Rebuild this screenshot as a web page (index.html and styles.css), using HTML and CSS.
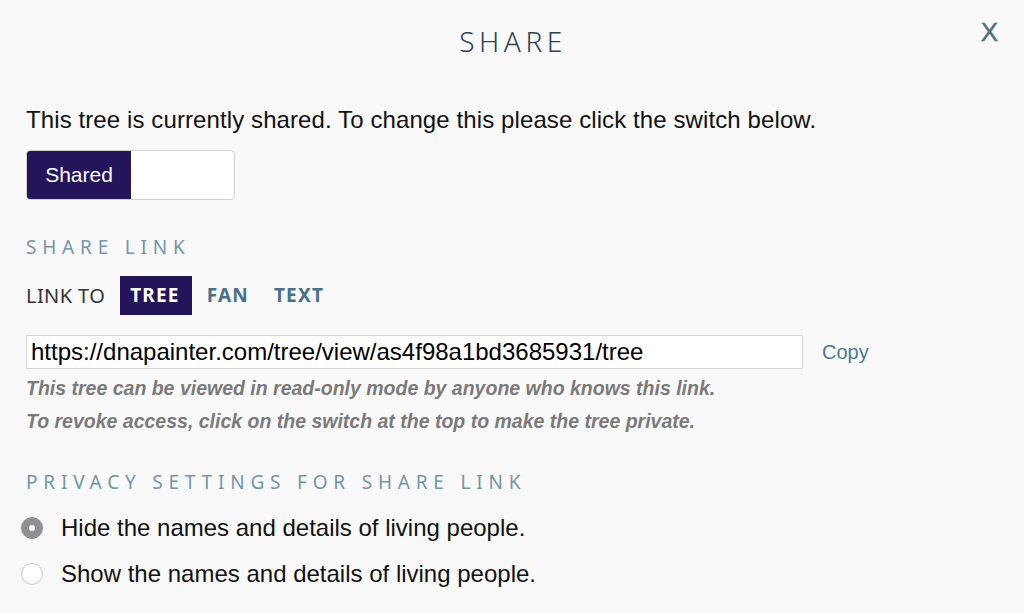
FILE: index.html
```html
<!DOCTYPE html>
<html lang="en">
<head>
    <meta charset="UTF-8">
    <title>Share</title>
    <link rel="stylesheet" href="styles.css">
</head>
<body>
    <div class="modal">
        <div class="modal-header">
            <h2>SHARE</h2>
            <span class="close">X</span>
        </div>

        <p class="status">This tree is currently shared. To change this please click the switch below.</p>
        <div class="toggle">
            <span class="toggle-on">Shared</span>
            <span class="toggle-off"></span>
        </div>

        <h3 class="section-title">SHARE LINK</h3>
        <div class="link-to">
            <span class="link-label">LINK TO</span>
            <span class="link-opt active">TREE</span>
            <span class="link-opt">FAN</span>
            <span class="link-opt">TEXT</span>
        </div>

        <div class="url-row">
            <input type="text" class="url" value="https://dnapainter.com/tree/view/as4f98a1bd3685931/tree" readonly>
            <a class="copy">Copy</a>
        </div>
        <p class="hint">This tree can be viewed in read-only mode by anyone who knows this link.</p>
        <p class="hint">To revoke access, click on the switch at the top to make the tree private.</p>

        <h3 class="section-title privacy">PRIVACY SETTINGS FOR SHARE LINK</h3>
        <label class="option"><span class="radio checked"></span>Hide the names and details of living people.</label>
        <label class="option"><span class="radio"></span>Show the names and details of living people.</label>
    </div>
</body>
</html>
```

FILE: styles.css
```css
body {
    margin: 0;
    background: #f9f9f9;
    font-family: 'Liberation Sans', Arial, sans-serif;
    color: #111;
}

.modal {
    padding: 0 26px;
}

.modal-header {
    position: relative;
    height: 86px;
    display: flex;
    justify-content: center;
    align-items: center;
}

.modal-header h2 {
    margin: 0 0 4px 2px;
    font-family: 'Noto Sans', sans-serif;
    font-weight: 300;
    font-size: 28px;
    letter-spacing: 4.5px;
    color: #2e4252;
}

.close {
    position: absolute;
    right: 0;
    top: 17px;
    font-family: 'Liberation Sans', Arial, sans-serif;
    font-size: 26px;
    color: #4a6d80;
    -webkit-text-stroke: 0.4px #4a6d80;
    cursor: pointer;
}

.status {
    margin: 18px 0 0;
    font-size: 24px;
    line-height: 32px;
    letter-spacing: 0.1px;
}

.toggle {
    display: flex;
    width: 207px;
    height: 48px;
    margin-top: 14px;
    border: 1px solid #cfcfcf;
    border-radius: 4px;
    overflow: hidden;
    background: #fff;
}

.toggle-on {
    width: 104px;
    background: #24145a;
    color: #fff;
    font-size: 21px;
    display: flex;
    align-items: center;
    justify-content: center;
}

.section-title {
    margin: 34px 0 0;
    font-family: 'Noto Sans', sans-serif;
    font-weight: 400;
    font-size: 19px;
    line-height: 26px;
    letter-spacing: 5.8px;
    color: #7196a8;
}

.link-to {
    display: flex;
    align-items: center;
    margin-top: 16px;
}

.link-label {
    font-family: 'Noto Sans', sans-serif;
    font-size: 20px;
    letter-spacing: 0.4px;
    color: #333;
    margin-right: 15px;
}

.link-opt {
    font-family: 'Noto Sans', sans-serif;
    font-weight: 700;
    font-size: 19px;
    line-height: 23px;
    letter-spacing: 1.2px;
    color: #47708a;
    padding: 8px 10px;
    margin-right: 5px;
}

.link-opt.active {
    background: #24145a;
    color: #fff;
    padding-right: 12px;
}

.url-row {
    display: flex;
    align-items: center;
    margin-top: 20px;
}

.url {
    width: 777px;
    height: 34px;
    box-sizing: border-box;
    border: 1px solid #d4d4d4;
    background: #fff;
    padding: 0 4px;
    font-family: 'Liberation Sans', Arial, sans-serif;
    font-size: 24px;
    color: #000;
}

.copy {
    margin-left: 19px;
    font-size: 20px;
    color: #4a7a90;
    cursor: pointer;
}

.hint {
    margin: 5px 0 0;
    font-size: 19.5px;
    line-height: 29px;
    font-style: italic;
    font-weight: 700;
    color: #7a7a7a;
}

.hint + .hint {
    margin-top: 4px;
}

.section-title.privacy {
    margin-top: 33px;
}

.option {
    display: flex;
    align-items: center;
    font-size: 24px;
    line-height: 30px;
    margin-top: 18px;
    margin-left: -5px;
}

.option + .option {
    margin-top: 16px;
}

.radio {
    width: 22px;
    height: 22px;
    box-sizing: border-box;
    border: 1px solid #c8c8c8;
    border-radius: 50%;
    background: #fff;
    margin-right: 18px;
    position: relative;
}

.radio.checked {
    background: #8e8e93;
    border-color: #8e8e93;
}

.radio.checked::after {
    content: '';
    position: absolute;
    left: 7px;
    top: 7px;
    width: 6px;
    height: 6px;
    border-radius: 50%;
    background: #fff;
}
```
